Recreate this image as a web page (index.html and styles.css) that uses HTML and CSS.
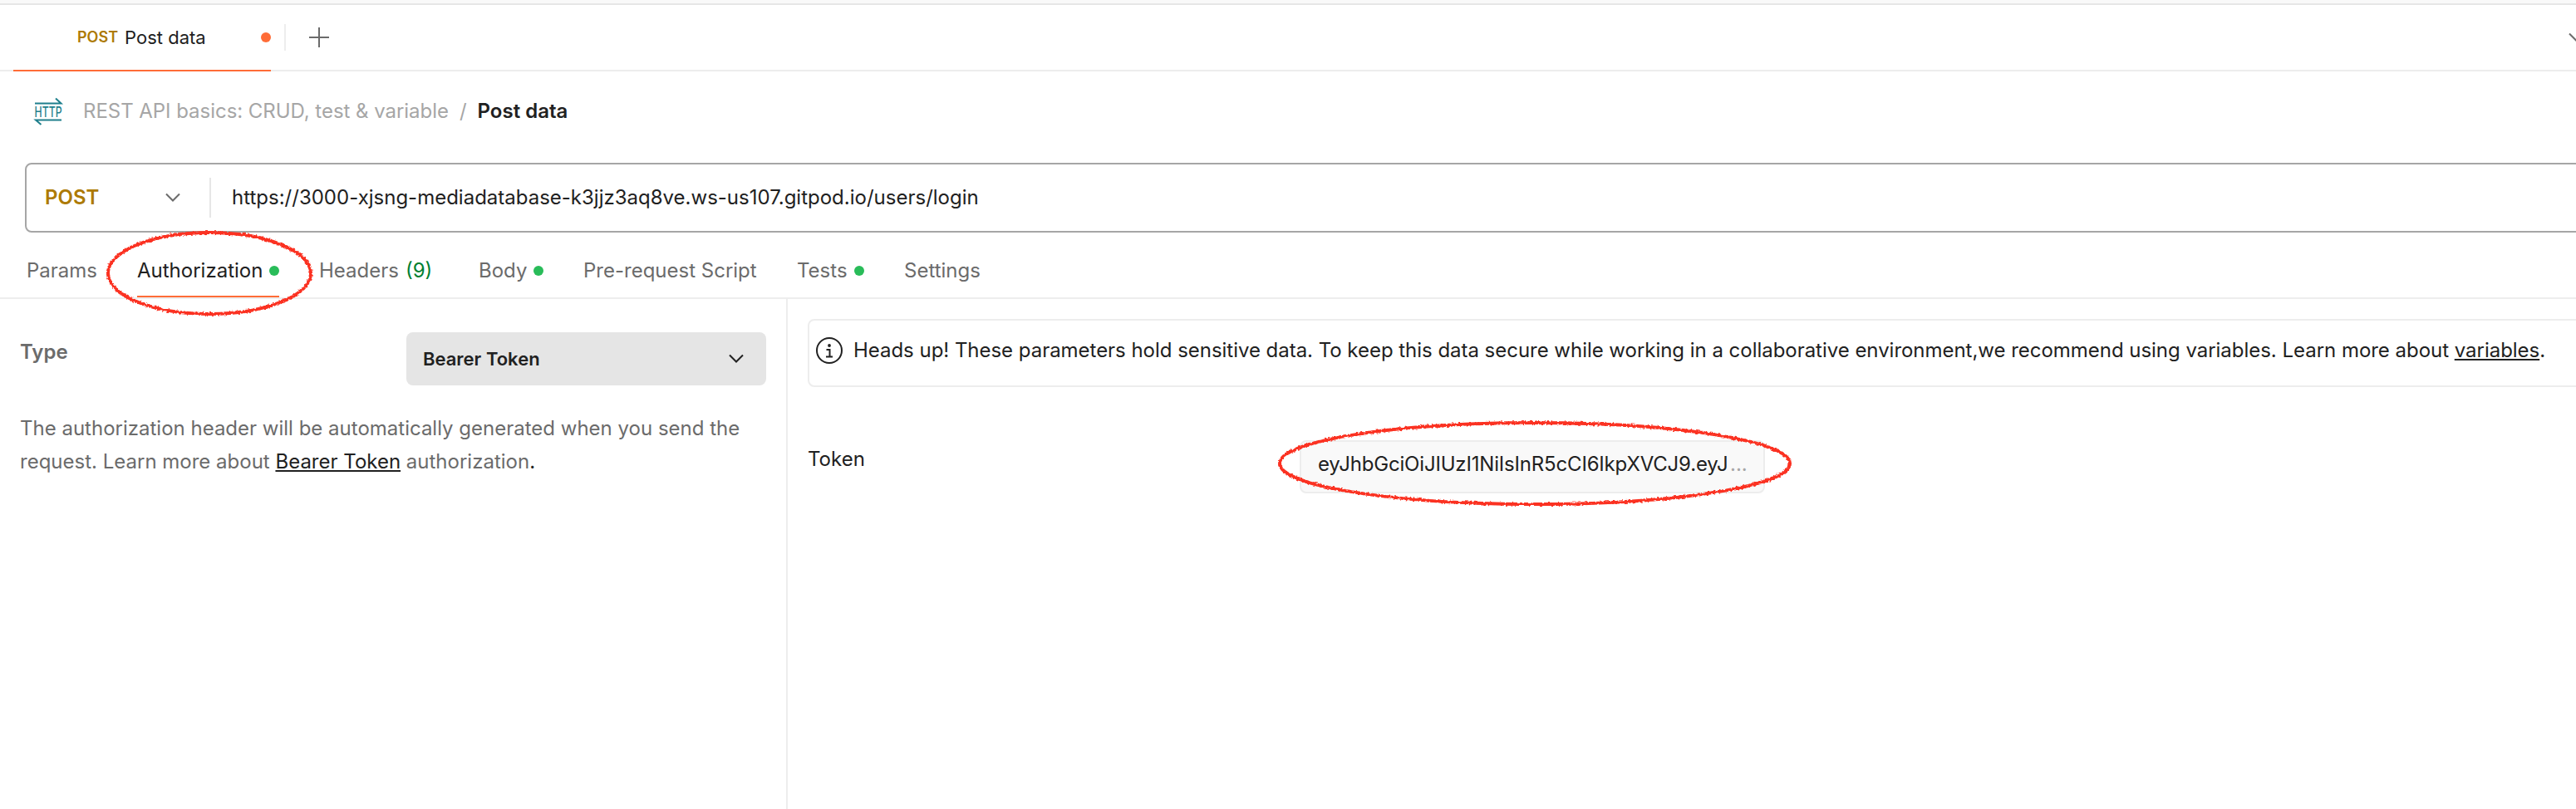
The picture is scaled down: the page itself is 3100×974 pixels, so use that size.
FILE: index.html
```
<!DOCTYPE html>
<html lang="en">
<head>
<meta charset="utf-8">
<title>Post data</title>
<link rel="stylesheet" href="styles.css">
</head>
<body>
<div class="app">
  <div class="top-strip"></div>

  <header class="tabbar">
    <div class="tab">
      <span class="tab-method">POST</span>
      <span class="tab-name">Post data</span>
      <span class="dot dot-unsaved"></span>
    </div>
    <span class="tab-sep"></span>
    <svg class="plus" width="24" height="24" viewBox="0 0 24 24"><path d="M12 0v24M0 12h24"/></svg>
    <svg class="chevron tab-more" width="18" height="12" viewBox="0 0 18 12"><path d="M1 1.5l8 8 8-8"/></svg>
  </header>

  <nav class="crumbs">
    <svg class="http" width="36" height="34" viewBox="0 0 36 34">
      <path d="M1 7.500h31.500L26 1.500M33 27.500H2L8.500 33"/>
      <text x="0.500" y="23.500" textLength="33" lengthAdjust="spacingAndGlyphs">HTTP</text>
    </svg>
    <span class="crumb">REST API basics: CRUD, test &amp; variable</span>
    <span class="slash">/</span>
    <span class="current">Post data</span>
  </nav>

  <div class="urlbar">
    <span class="method">POST</span>
    <svg class="chevron" width="18" height="12" viewBox="0 0 18 12"><path d="M1 1.5l8 8 8-8"/></svg>
    <span class="url-sep"></span>
    <span class="url">https://3000-xjsng-mediadatabase-k3jjz3aq8ve.ws-us107.gitpod.io/users/login</span>
  </div>

  <nav class="sections">
    <div class="section">Params</div>
    <div class="section active">Authorization<span class="dot"></span></div>
    <div class="section">Headers<span class="count">(9)</span></div>
    <div class="section">Body<span class="dot"></span></div>
    <div class="section">Pre-request Script</div>
    <div class="section">Tests<span class="dot"></span></div>
    <div class="section">Settings</div>
    <svg class="mark mark-auth" width="256" height="112" viewBox="0 0 256 112">
      <filter id="rough" x="-5%" y="-5%" width="110%" height="110%">
        <feTurbulence type="fractalNoise" baseFrequency="0.35" numOctaves="2" seed="4"/>
        <feDisplacementMap in="SourceGraphic" scale="4" xChannelSelector="R" yChannelSelector="G"/>
      </filter>
      <ellipse cx="128" cy="56" rx="122" ry="49" filter="url(#rough)"/>
    </svg>
  </nav>

  <main class="panes">
    <section class="left">
      <div class="type-row">
        <span class="type">Type</span>
        <div class="select">
          <span>Bearer Token</span>
          <svg class="chevron" width="18" height="12" viewBox="0 0 18 12"><path d="M1 1.5l8 8 8-8"/></svg>
        </div>
      </div>
      <p class="help">The authorization header will be automatically generated when you send the<br>request. Learn more about <a class="link">Bearer Token</a> authorization<span class="stop">.</span></p>
    </section>

    <section class="right">
      <div class="notice">
        <svg class="info" width="32" height="32" viewBox="0 0 32 32">
          <circle class="ring" cx="16" cy="16" r="15"/>
          <circle class="tittle" cx="16" cy="10" r="1.9"/>
          <path d="M12.500 15h4v8M12 23.500h8"/>
        </svg>
        <span class="notice-text">Heads up! These parameters hold sensitive data. To keep this data secure while working in a collaborative environment,we recommend using variables. Learn more about <a class="link">variables</a>.</span>
      </div>
      <div class="token-row">
        <span class="token-label">Token</span>
        <div class="token-input">
          <span class="token-value">eyJhbGciOiJIUzI1NiIsInR5cCI6IkpXVCJ9.eyJ</span>
          <span class="token-more">...</span>
          <svg class="mark mark-token" width="626" height="112" viewBox="0 0 626 112">
            <ellipse cx="313" cy="56" rx="307" ry="49" filter="url(#rough)"/>
          </svg>
        </div>
      </div>
    </section>
  </main>
</div>
</body>
</html>
```
FILE: styles.css
```
* { box-sizing: border-box; }

body {
  margin: 0;
  background: #fff;
  color: #212121;
  font: 400 24px/30px Inter, "Liberation Sans", sans-serif;
  white-space: nowrap;
}

svg { display: block; flex: none; fill: none; }

.app {
  display: flex;
  flex-direction: column;
  width: 3100px;
  height: 974px;
  overflow: hidden;
}

.top-strip {
  height: 6px;
  flex: none;
  background: #f9f9f9;
  border-bottom: 2px solid #e6e6e6;
}

.dot {
  width: 12px;
  height: 12px;
  border-radius: 50%;
  background: #29bc59;
}

.chevron { stroke: #6b6b6b; stroke-width: 2; }

.link {
  color: #212121;
  text-decoration: underline;
  text-decoration-thickness: 2px;
  text-underline-offset: 2px;
  text-decoration-skip-ink: none;
}

/* Open request tabs */
.tabbar {
  display: flex;
  align-items: center;
  flex: none;
  height: 80px;
  padding-left: 16px;
  border-bottom: 2px solid #ededed;
}

.tab {
  display: flex;
  align-items: center;
  align-self: stretch;
  width: 310px;
  margin-bottom: -2px;
  padding-left: 77px;
  border-bottom: 2px solid #ff6c37;
  font-size: 22px;
}

.tab-method {
  margin-right: 8px;
  color: #ad7a03;
  font-size: 18px;
  font-weight: 600;
}

.dot-unsaved { margin-left: auto; background: #ff6c37; }
.tab-sep { width: 2px; height: 32px; margin-left: 16px; background: #ededed; }
.plus { margin-left: 28px; stroke: #6b6b6b; stroke-width: 2; }
.tab-more { margin-left: auto; margin-right: -9px; }

/* Breadcrumb */
.crumbs {
  display: flex;
  align-items: center;
  flex: none;
  height: 96px;
  margin-bottom: 14px;
  padding-left: 41px;
}

.http { overflow: visible; stroke: #1f7f8c; stroke-width: 2; }
.http text {
  fill: #1f7f8c;
  stroke: none;
  font-size: 17px;
  line-height: 18px;
  font-weight: 500;
}
.crumb { margin-left: 23px; color: #a6a6a6; letter-spacing: -0.04px; }
.slash { margin-left: 13px; color: #a6a6a6; }
.current { margin-left: 13px; font-weight: 600; }

/* Request URL */
.urlbar {
  display: flex;
  align-items: center;
  flex: none;
  height: 84px;
  margin: 0 -12px 0 30px;
  padding-left: 22px;
  border: 2px solid #a6a6a6;
  border-radius: 8px;
}

.method { width: 145px; color: #ad7a03; font-weight: 600; }
.url-sep { width: 2px; height: 48px; margin-left: 35px; background: #e6e6e6; }
.url { margin-left: 25px; }

/* Request sections */
.sections {
  position: relative;
  display: grid;
  grid-template-columns: 133px 219px 192px 126px 257px 129px auto;
  flex: none;
  height: 80px;
  padding-left: 32px;
  border-bottom: 2px solid #ededed;
  color: #6b6b6b;
}

.section {
  display: flex;
  align-items: center;
  justify-self: start;
  padding-top: 13px;
}

.section .dot { margin-left: 8px; }
.section.active {
  padding-top: 15px;
  border-bottom: 2px solid #ff6c37;
  color: #212121;
}
.count { margin-left: 8px; color: #007f31; }

/* Hand-drawn highlights laid over the content */
.mark {
  position: absolute;
  z-index: 1;
  stroke: #fb3222;
  stroke-width: 4;
  pointer-events: none;
}
.mark-auth { left: 124px; top: -7px; }

/* Auth panes */
.panes { display: flex; flex: 1; }

.left {
  flex: none;
  width: 948px;
  padding: 40px 24px 0;
  border-right: 2px solid #ededed;
}

.type-row { display: flex; justify-content: space-between; }
.type { padding-top: 9px; color: #6b6b6b; font-weight: 600; }

.select {
  display: flex;
  align-items: center;
  justify-content: space-between;
  width: 433px;
  height: 64px;
  padding: 0 27px 0 20px;
  border-radius: 8px;
  background: #e5e5e5;
  font-size: 22px;
  font-weight: 600;
}
.select .chevron { stroke: #212121; }

.help {
  margin: 32px 0 0;
  color: #6b6b6b;
  line-height: 40px;
}
.stop { color: #212121; }

.right { flex: 1; padding: 24px 0 0 24px; }

.notice {
  display: flex;
  height: 82px;
  margin-right: -12px;
  padding: 20px 0 0 8px;
  border: 2px solid #ededed;
  border-radius: 8px;
}
.notice-text { margin-left: 13px; padding-top: 1px; letter-spacing: -0.03px; }
.ring { stroke: #212121; stroke-width: 2; }
.tittle { fill: #212121; }
.info path { stroke: #212121; stroke-width: 2; }

.token-row { display: flex; margin-top: 64px; }
.token-label { width: 592px; padding-top: 8px; }

.token-input {
  position: relative;
  display: flex;
  width: 560px;
  height: 64px;
  padding: 12px 0 0 20px;
  border: 2px solid #ededed;
  border-radius: 8px;
  background: #f9f9f9;
}
.token-value {
  width: 493px;
  overflow: hidden;
  letter-spacing: -0.18px;
}
.token-more { margin-left: 3px; color: #a6a6a6; }
.mark-token { left: -32px; top: -30px; }
```
